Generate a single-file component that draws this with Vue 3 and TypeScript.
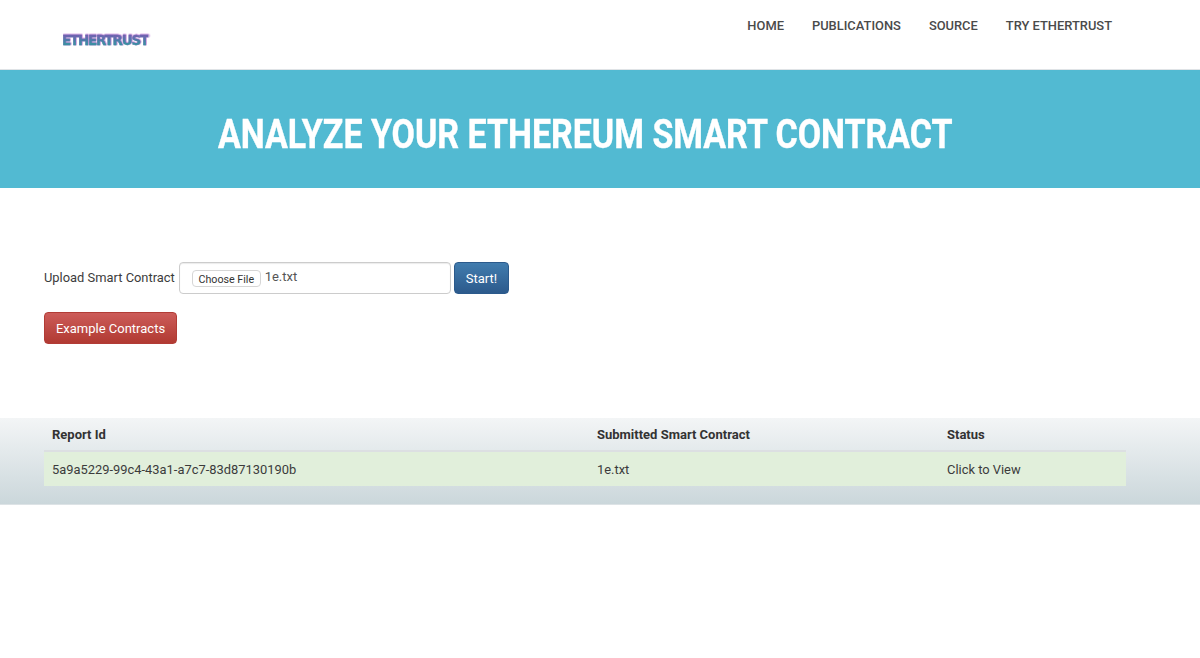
<script setup lang="ts">
const nav: string[] = ['HOME', 'PUBLICATIONS', 'SOURCE', 'TRY ETHERTRUST']
const rows = [{ id: '5a9a5229-99c4-43a1-a7c7-83d87130190b', file: '1e.txt', status: 'Click to View' }]
</script>

<template>
  <div class="page">
    <header class="topbar">
      <div class="logo">ETHERTRUST</div>
      <nav class="nav">
        <a v-for="n in nav" :key="n">{{ n }}</a>
      </nav>
    </header>
    <section class="hero">
      <h1>ANALYZE YOUR ETHEREUM SMART CONTRACT</h1>
    </section>
    <section class="form">
      <div class="upload">
        <label>Upload Smart Contract</label>
        <div class="file">
          <span class="choose">Choose File</span>
          <span class="fname">1e.txt</span>
        </div>
        <button class="btn blue">Start!</button>
      </div>
      <button class="btn red">Example Contracts</button>
    </section>
    <section class="band">
      <table>
        <colgroup>
          <col class="c1" />
          <col class="c2" />
          <col />
        </colgroup>
        <thead>
          <tr>
            <th>Report Id</th>
            <th>Submitted Smart Contract</th>
            <th>Status</th>
          </tr>
        </thead>
        <tbody>
          <tr v-for="r in rows" :key="r.id">
            <td>{{ r.id }}</td>
            <td>{{ r.file }}</td>
            <td>{{ r.status }}</td>
          </tr>
        </tbody>
      </table>
    </section>
  </div>
</template>

<style>
html, body { background: #fff; }
</style>

<style scoped>
.page {
  font-family: Roboto, "Liberation Sans", sans-serif;
  font-size: 14px;
  color: #333;
  height: 658px;
  overflow: hidden;
}
.topbar {
  height: 69px;
  border-bottom: 1px solid #dfe3e6;
  box-sizing: content-box;
  display: flex;
  justify-content: space-between;
  align-items: flex-start;
  padding: 0 88px 0 62px;
}
.logo {
  margin-top: 33px;
  font-family: "DejaVu Sans", sans-serif;
  font-weight: 700;
  font-size: 13.4px;
  line-height: 15px;
  letter-spacing: -1.15px;
  background: linear-gradient(180deg, #7d5cb4 10%, #4a7fa8 50%, #2f9f9f 90%);
  -webkit-background-clip: text;
  background-clip: text;
  color: transparent;
  -webkit-text-stroke: 0.3px rgba(90, 110, 170, 0.7);
  filter: drop-shadow(1px 0 0 rgba(190, 120, 210, 0.55)) drop-shadow(0 -1px 0 rgba(190, 120, 210, 0.5)) blur(0.4px);
}
.nav {
  display: flex;
  gap: 28px;
  margin-top: 18px;
}
.nav a {
  font-size: 12.9px;
  font-weight: 500;
  line-height: 16px;
  color: #4a4a4a;
}
.hero {
  height: 118px;
  box-sizing: border-box;
  background: #52bad2;
  display: flex;
  align-items: center;
  padding: 10px 0 0 218px;
}
.hero h1 {
  margin: 0;
  font-family: Roboto, sans-serif;
  font-weight: 700;
  font-size: 41px;
  line-height: 44px;
  color: #fff;
  white-space: nowrap;
  -webkit-text-stroke: 0.4px #fff;
  transform: scaleX(0.828);
  transform-origin: left center;
}
.form {
  height: 230px;
  box-sizing: border-box;
  padding: 74px 44px 0;
}
.upload {
  display: flex;
  align-items: center;
  height: 32px;
}
.upload label {
  width: 135px;
  font-size: 12.9px;
  line-height: 16px;
  margin-top: -1px;
  color: #3c3c3c;
  white-space: nowrap;
}
.file {
  width: 272px;
  height: 32px;
  box-sizing: border-box;
  border: 1px solid #ccc;
  border-radius: 4px;
  box-shadow: inset 0 1px 1px rgba(0, 0, 0, 0.08);
  display: flex;
  align-items: center;
  padding-left: 12px;
  gap: 4px;
  background: #fff;
}
.choose {
  font-size: 10.7px;
  line-height: 15px;
  height: 17px;
  box-sizing: border-box;
  padding: 1px 5.5px;
  margin-top: 1px;
  border: 1px solid #d6d6d6;
  border-radius: 4px;
  color: #333;
  background: #fff;
}
.fname {
  font-size: 13px;
  color: #555;
  margin-top: -3px;
}
.btn {
  font-family: Roboto, sans-serif;
  font-size: 13px;
  height: 32px;
  color: #fff;
  border-radius: 4px;
  padding: 0 12px;
  cursor: pointer;
}
.blue {
  margin-left: 3px;
  width: 55px;
  padding: 0;
  background: linear-gradient(180deg, #417cae 0%, #2c5a8c 100%);
  border: 1px solid #2b5a8c;
}
.red {
  display: block;
  margin-top: 18px;
  width: 133px;
  padding: 0;
  background: linear-gradient(180deg, #cc5c59 0%, #b13a32 100%);
  border: 1px solid #b23c36;
}
.band {
  height: 87px;
  box-sizing: border-box;
  padding: 0 74px 0 44px;
  background: linear-gradient(180deg, #f3f5f6 0%, #cbd7db 100%);
  border-bottom: 1px solid #dde3e6;
}
table {
  width: 1082px;
  border-collapse: collapse;
  table-layout: fixed;
  font-size: 12.9px;
}
.c1 { width: 545px; }
.c2 { width: 350px; }
th {
  text-align: left;
  font-weight: 700;
  font-size: 13px;
  color: #333;
  height: 32px;
  padding: 0 8px;
  border-bottom: 2px solid #dcdfe2;
}
td {
  height: 34px;
  padding: 0 8px;
  background: #e1efdb;
  color: #3b3b3b;
}
</style>
